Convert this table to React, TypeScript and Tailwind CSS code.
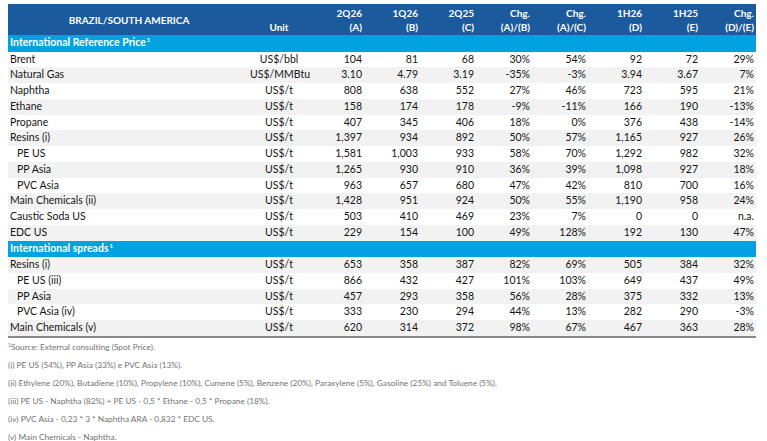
const font = { fontFamily: "Lato, 'Open Sans', sans-serif" };

type Row = { label: string; unit: string; v: string[]; indent?: boolean };

const section1: Row[] = [
  { label: "Brent", unit: "US$/bbl", v: ["104", "81", "68", "30%", "54%", "92", "72", "29%"] },
  { label: "Natural Gas", unit: "US$/MMBtu", v: ["3.10", "4.79", "3.19", "-35%", "-3%", "3.94", "3.67", "7%"] },
  { label: "Naphtha", unit: "US$/t", v: ["808", "638", "552", "27%", "46%", "723", "595", "21%"] },
  { label: "Ethane", unit: "US$/t", v: ["158", "174", "178", "-9%", "-11%", "166", "190", "-13%"] },
  { label: "Propane", unit: "US$/t", v: ["407", "345", "406", "18%", "0%", "376", "438", "-14%"] },
  { label: "Resins (i)", unit: "US$/t", v: ["1,397", "934", "892", "50%", "57%", "1,165", "927", "26%"] },
  { label: "PE US", unit: "US$/t", indent: true, v: ["1,581", "1,003", "933", "58%", "70%", "1,292", "982", "32%"] },
  { label: "PP Asia", unit: "US$/t", indent: true, v: ["1,265", "930", "910", "36%", "39%", "1,098", "927", "18%"] },
  { label: "PVC Asia", unit: "US$/t", indent: true, v: ["963", "657", "680", "47%", "42%", "810", "700", "16%"] },
  { label: "Main Chemicals (ii)", unit: "US$/t", v: ["1,428", "951", "924", "50%", "55%", "1,190", "958", "24%"] },
  { label: "Caustic Soda US", unit: "US$/t", v: ["503", "410", "469", "23%", "7%", "0", "0", "n.a."] },
  { label: "EDC US", unit: "US$/t", v: ["229", "154", "100", "49%", "128%", "192", "130", "47%"] },
];

const section2: Row[] = [
  { label: "Resins (i)", unit: "US$/t", v: ["653", "358", "387", "82%", "69%", "505", "384", "32%"] },
  { label: "PE US (iii)", unit: "US$/t", indent: true, v: ["866", "432", "427", "101%", "103%", "649", "437", "49%"] },
  { label: "PP Asia", unit: "US$/t", indent: true, v: ["457", "293", "358", "56%", "28%", "375", "332", "13%"] },
  { label: "PVC Asia (iv)", unit: "US$/t", indent: true, v: ["333", "230", "294", "44%", "13%", "282", "290", "-3%"] },
  { label: "Main Chemicals (v)", unit: "US$/t", v: ["620", "314", "372", "98%", "67%", "467", "363", "28%"] },
];

const headers = [
  ["2Q26", "(A)"],
  ["1Q26", "(B)"],
  ["2Q25", "(C)"],
  ["Chg.", "(A)/(B)"],
  ["Chg.", "(A)/(C)"],
  ["1H26", "(D)"],
  ["1H25", "(E)"],
  ["Chg.", "(D)/(E)"],
];

const cols = "grid grid-cols-[242px_58px_repeat(8,56px)]";

function DataRow({ row, shaded }: { row: Row; shaded: boolean }) {
  return (
    <div className={`${cols} h-[15.75px] items-center text-[10.5px] text-[#141414] ${shaded ? "bg-[#f2f2f2]" : "bg-white"}`}>
      <div className={row.indent ? "pl-[9px]" : "pl-[2px]"}>{row.label}</div>
      <div className="text-center">{row.unit}</div>
      {row.v.map((x, i) => (
        <div key={i} className="pr-[2px] text-right">
          {x}
        </div>
      ))}
    </div>
  );
}

function SectionHeader({ title }: { title: string }) {
  return (
    <div className="flex h-[16.5px] items-center bg-[#00a3e0] pl-[2px] text-[10.5px] font-bold text-white">
      {title}
      <sup className="ml-[1px] text-[6px]">1</sup>
    </div>
  );
}

export default function App() {
  return (
    <div className="h-[441px] w-[767px] overflow-hidden bg-white pl-[8px] pt-[4px]" style={font}>
      <div className="w-[748px]">
        <div className={`${cols} h-[31px] bg-[#1b5a9c] text-[10px] font-bold leading-[14px] text-white`}>
          <div className="flex items-center justify-center">BRAZIL/SOUTH AMERICA</div>
          <div className="flex items-end justify-center pb-[1px]">Unit</div>
          {headers.map((h, i) => (
            <div key={i} className="flex flex-col items-end justify-center pr-[2px]">
              <span>{h[0]}</span>
              <span>{h[1]}</span>
            </div>
          ))}
        </div>
        <SectionHeader title="International Reference Price" />
        {section1.map((r, i) => (
          <DataRow key={r.label + i} row={r} shaded={i % 2 === 1} />
        ))}
        <SectionHeader title="International spreads" />
        {section2.map((r, i) => (
          <DataRow key={r.label + i} row={r} shaded={i % 2 === 0} />
        ))}
        <div className="h-[2px] bg-[#8a8a8a]" />
      </div>
      <div className="flex flex-col text-[8.3px] leading-[18px] text-[#737373]">
        <div>
          <sup className="text-[5px]">1</sup>Source: External consulting (Spot Price).
        </div>
        <div>(i) PE US (54%), PP Asia (33%) e PVC Asia (13%).</div>
        <div>
          (ii) Ethylene (20%), Butadiene (10%), Propylene (10%), Cumene (5%), Benzene (20%), Paraxylene (5%), Gasoline (25%) and Toluene (5%).
        </div>
        <div>(iii) PE US - Naphtha (82%) + PE US - 0,5 * Ethane - 0,5 * Propane (18%).</div>
        <div>(iv) PVC Asia - 0,23 * 3 * Naphtha ARA - 0,832 * EDC US.</div>
        <div>(v) Main Chemicals - Naphtha.</div>
      </div>
    </div>
  );
}
